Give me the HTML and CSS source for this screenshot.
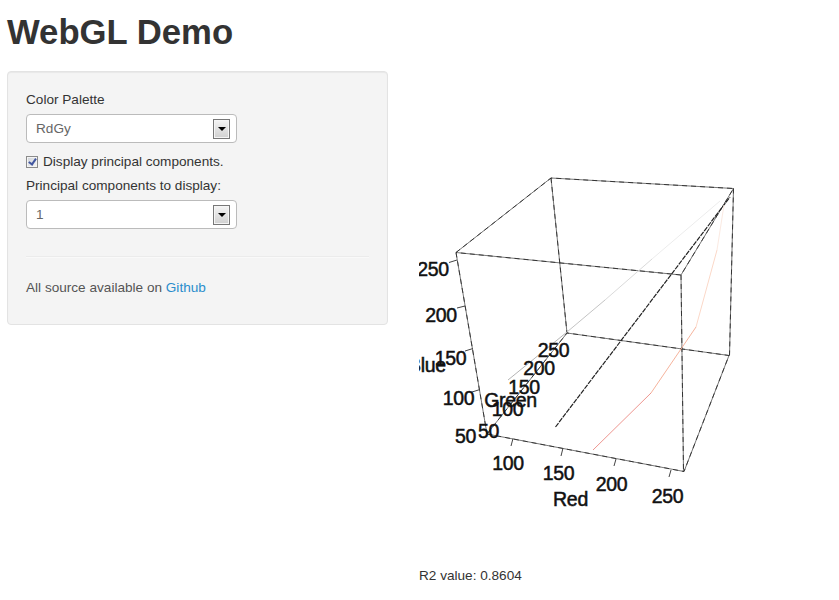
FILE: index.html
```html
<!DOCTYPE html>
<html>
<head>
  <meta charset="utf-8">
  <title>WebGL Demo</title>
  <link rel="stylesheet" href="styles.css">
</head>
<body>
  <div class="container">
    <h1>WebGL Demo</h1>
    <div class="row">
      <form class="well">
        <label class="control-label" for="palette">Color Palette</label>
        <div class="select">
          <select id="palette">
            <option>RdGy</option>
          </select>
          <span class="arrow"></span>
        </div>
        <label class="checkbox">
          <input type="checkbox" checked>
          <span>Display principal components.</span>
        </label>
        <label class="control-label" for="pc">Principal components to display:</label>
        <div class="select">
          <select id="pc">
            <option>1</option>
          </select>
          <span class="arrow"></span>
        </div>
        <hr>
        <p>All source available on <a href="#">Github</a></p>
      </form>
      <div class="main">
        <svg class="plot" width="400" height="480" viewBox="419 71 400 480">
          <!-- bounding box -->
          <g id="box">
            <path d="M456 252.500L551 178L733.500 188.500L681 275Z"/>
            <path d="M487 434L567 333L729 355.500L684 471.500Z"/>
            <path d="M456 252.500L487 434M551 178L567 333M733.500 188.500L729.500 355.500M681 275L683.500 471.500"/>
          </g>
          <use href="#box" class="dashes"/>
          <g class="ticks">
            <path d="M449 262.500L457 260M457 308L465 306M465 351L473 348.500M472 392L480 389.500"/>
            <path d="M513 438.500L511 446M563 448L561 456M616 459L614 466M671 470L669 477"/>
          </g>
          <!-- principal component and palette curves -->
          <path class="pc" d="M555.500 427L730 197"/>
          <g class="curve">
            <path stroke="#b4b4b4" d="M508 380L567 332"/>
            <path stroke="#c4c4c4" d="M567 332L605 300"/>
            <path stroke="#dadada" d="M605 300L652 259"/>
            <path stroke="#ececec" d="M652 259L720 201"/>
            <path stroke="#fbeae2" d="M724 205L717 250"/>
            <path stroke="#fbd8c8" d="M717 250L696 327"/>
            <path stroke="#f6b49d" d="M696 327L651 393"/>
            <path stroke="#ee9690" d="M651 393L593 450"/>
          </g>
          <g class="labels">
            <text x="433" y="275.500">250</text>
            <text x="441" y="321.500">200</text>
            <text x="450.500" y="364.500">150</text>
            <text x="458.500" y="405">100</text>
            <text x="465.500" y="443">50</text>
            <text x="427" y="372">Blue</text>
            <text x="553.500" y="356.500">250</text>
            <text x="539" y="374.500">200</text>
            <text x="524" y="394">150</text>
            <text x="507.500" y="415.500">100</text>
            <text x="488.500" y="438">50</text>
            <text x="510.500" y="407">Green</text>
            <text x="508" y="470">100</text>
            <text x="558.500" y="480">150</text>
            <text x="611.500" y="491">200</text>
            <text x="667.500" y="502.500">250</text>
            <text x="570.500" y="506">Red</text>
          </g>
        </svg>
        <div class="r2">R2 value: 0.8604</div>
      </div>
    </div>
  </div>
</body>
</html>
```
FILE: styles.css
```css
body {
  margin: 0;
  background: #fff;
  color: #333;
  font-family: "Liberation Sans", Arial, sans-serif;
  font-size: 13.6px;
  line-height: 19px;
}
.container {
  padding: 13px 7px 0;
}
h1 {
  margin: 0 0 20px;
  font-size: 34.7px;
  line-height: 38px;
  font-weight: bold;
}
.row {
  display: flex;
  gap: 31px;
}
.well {
  box-sizing: border-box;
  width: 381px;
  height: 254px;
  padding: 18px;
  background-color: #f4f4f4;
  border: 1px solid #e3e3e3;
  border-radius: 4px;
  box-shadow: inset 0 1px 1px rgba(0, 0, 0, 0.05);
}
.control-label {
  display: block;
  margin-bottom: 5px;
}
.select {
  box-sizing: border-box;
  display: flex;
  align-items: center;
  width: 211px;
  height: 29px;
  margin-bottom: 9px;
  padding: 0 6px 0 9px;
  background: #fff;
  border: 1px solid #bbb;
  border-radius: 4px;
}
.select select {
  flex: 1;
  appearance: none;
  padding: 0;
  border: none;
  background: none;
  color: #666;
  font: inherit;
}
.arrow {
  box-sizing: border-box;
  display: flex;
  align-items: center;
  justify-content: center;
  width: 17px;
  height: 20px;
  border: 1px solid #777;
  background: linear-gradient(#f4f4f4, #d0d0d0);
  box-shadow: inset 0 0 0 1px #f5f5f5;
}
.arrow::before {
  content: "";
  border: 4px solid transparent;
  border-top-color: #000;
  border-bottom: none;
}
.checkbox {
  display: flex;
  align-items: center;
  gap: 5px;
  margin-bottom: 5px;
}
.checkbox input {
  appearance: none;
  box-sizing: border-box;
  display: flex;
  width: 12px;
  height: 12px;
  margin: 0;
  border: 1px solid #8b8b8b;
  background: linear-gradient(135deg, #cfd3d9, #f6f6f6);
  box-shadow: inset 0 0 0 1px #f4f4f4;
}
.checkbox input::before {
  content: "";
  width: 3px;
  height: 6px;
  margin: 0 0 0 3px;
  border: solid #4257a0;
  border-width: 0 2px 2px 0;
  transform: rotate(35deg);
}
hr {
  margin: 27px 0 20px;
  border: 0;
  border-top: 1px solid #ebebeb;
  border-bottom: 1px solid #f9f9f9;
}
p {
  margin: 0;
  color: #555;
}
a {
  color: #2a8dcc;
  text-decoration: none;
}
.plot {
  display: block;
  stroke: #777;
}
.plot path {
  fill: none;
}
.dashes {
  stroke: #222;
  stroke-width: 0.8;
  stroke-dasharray: 5 4;
}
.ticks path {
  stroke: #444;
}
.pc {
  stroke: #222;
  stroke-width: 1.2;
  stroke-dasharray: 5 1;
}
.labels text {
  font-size: 19.5px;
  letter-spacing: -0.3px;
  text-anchor: middle;
  fill: #111;
  stroke: #111;
  stroke-width: 0.5;
}
.r2 {
  margin-top: 15px;
}
```
